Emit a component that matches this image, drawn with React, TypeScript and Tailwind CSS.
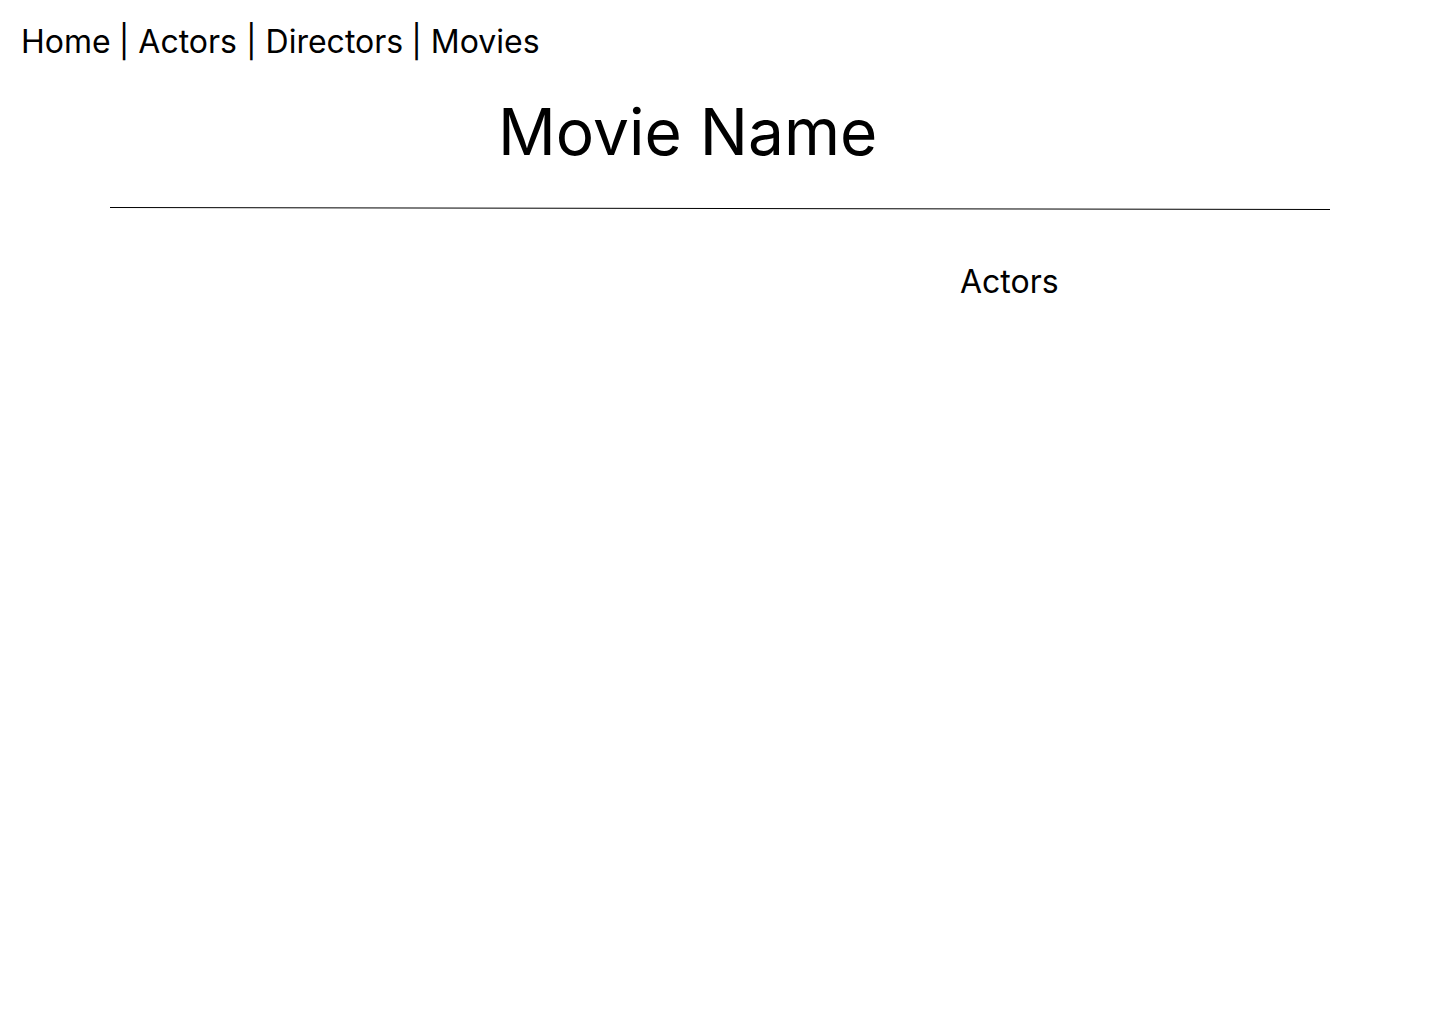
export default function App() {
  return (
    <div className="min-h-screen bg-white text-black" style={{ fontFamily: "Inter, 'Noto Sans', sans-serif" }}>
      <nav className="pl-[21px] pt-[18px] text-[32px] leading-[48px] flex items-center">
        <span>Home</span>
        <span className="pl-[8px] pr-[9px]">|</span>
        <span>Actors</span>
        <span className="pl-[9px] pr-[9px]">|</span>
        <span>Directors</span>
        <span className="pl-[8px] pr-[9px]">|</span>
        <span>Movies</span>
      </nav>
      <h1 className="pl-[498px] mt-[26px] text-[64px] leading-[80px]">Movie Name</h1>
      <div className="ml-[110px] mt-[35px]">
        <svg width="1220" height="4" viewBox="0 0 1220 4" className="block">
          <line x1="0" y1="0.5" x2="1220" y2="2.5" stroke="#000" strokeWidth="1" />
        </svg>
      </div>
      <div className="pl-[960px] mt-[47px] text-[32px] leading-[48px]">Actors</div>
    </div>
  );
}
